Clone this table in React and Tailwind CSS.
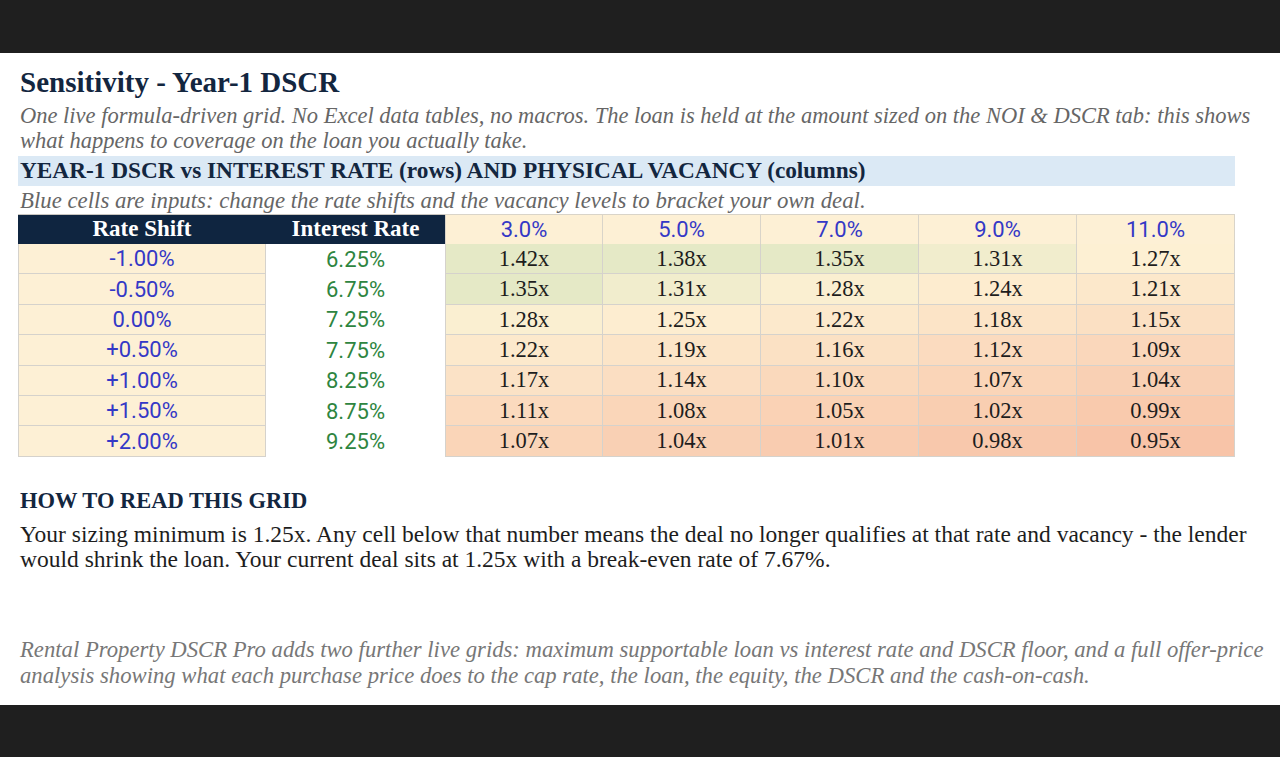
import React from 'react';

const serif = { fontFamily: '"Liberation Serif", "DejaVu Serif", serif' };

const shifts = ['-1.00%', '-0.50%', '0.00%', '+0.50%', '+1.00%', '+1.50%', '+2.00%'];
const rates = ['6.25%', '6.75%', '7.25%', '7.75%', '8.25%', '8.75%', '9.25%'];
const vacancies = ['3.0%', '5.0%', '7.0%', '9.0%', '11.0%'];
const grid = [
  [1.42, 1.38, 1.35, 1.31, 1.27],
  [1.35, 1.31, 1.28, 1.24, 1.21],
  [1.28, 1.25, 1.22, 1.18, 1.15],
  [1.22, 1.19, 1.16, 1.12, 1.09],
  [1.17, 1.14, 1.1, 1.07, 1.04],
  [1.11, 1.08, 1.05, 1.02, 0.99],
  [1.07, 1.04, 1.01, 0.98, 0.95],
];

// three-colour scale: orange (low) -> cream (mid) -> green (high)
const low = [248, 196, 168];
const mid = [253, 240, 211];
const high = [229, 233, 198];
const mix = (a, b, t) => a.map((v, i) => Math.round(v + (b[i] - v) * t));
const cellColor = (v) => {
  let c;
  if (v >= 1.27) c = mix(mid, high, Math.min(1, (v - 1.27) / 0.08));
  else c = mix(mid, low, Math.min(1, (1.27 - v) / 0.32));
  return `rgb(${c[0]}, ${c[1]}, ${c[2]})`;
};

const App = () => {
  return (
    <div className="w-[1280px] h-[757px] bg-white flex flex-col overflow-hidden">
      <div className="h-[53px] bg-[#1f1f1f] shrink-0" />

      <div className="flex-1 px-[20px] pt-[12px]" style={serif}>
        <h1 className="text-[29px] font-bold text-[#13263f] leading-[34px]">
          Sensitivity - Year-1 DSCR
        </h1>
        <p className="mt-[4px] italic text-[#666666] text-[22.5px] leading-[25px] whitespace-nowrap">
          One live formula-driven grid. No Excel data tables, no macros. The loan is held at the amount sized on the NOI &amp; DSCR tab: this shows
          <br />
          what happens to coverage on the loan you actually take.
        </p>

        <div className="-ml-[2px] w-[1217px] mt-[3px] h-[30px] bg-[#dbe9f5] flex items-center px-[2px]">
          <h2 className="text-[23.3px] font-bold text-[#13263f] leading-none">
            YEAR-1 DSCR vs INTEREST RATE (rows) AND PHYSICAL VACANCY (columns)
          </h2>
        </div>

        <p className="mt-[2px] italic text-[#666666] text-[22.8px] leading-[26px] whitespace-nowrap">
          Blue cells are inputs: change the rate shifts and the vacancy levels to bracket your own deal.
        </p>

        {/* Sensitivity grid */}
        <div className="-ml-[2px] w-[1217px] grid grid-cols-[248px_179px_repeat(5,1fr)] text-[22.5px]">
          <div className="h-[30px] bg-[#0f2540] border-t border-[#c9c6c0] text-white font-bold flex items-center justify-center text-[23px]">
            Rate Shift
          </div>
          <div className="h-[30px] bg-[#0f2540] border-t border-[#c9c6c0] text-white font-bold flex items-center justify-center text-[23px]">
            Interest Rate
          </div>
          {vacancies.map((v, i) => (
            <div
              key={v}
              className={`h-[30px] bg-[#fdf0d5] border-r border-t border-[#d9d4c9] text-[#3438c6] flex items-center justify-center font-[Roboto,sans-serif] text-[22px] ${i === 0 ? 'border-l' : ''}`}
            >
              {v}
            </div>
          ))}

          {grid.map((row, r) => (
            <React.Fragment key={r}>
              <div className="h-[30.4px] bg-[#fdf0d5] border-b border-l border-r border-[#d5d2cc] text-[#3438c6] flex items-center justify-center font-[Roboto,sans-serif] text-[22px]">
                {shifts[r]}
              </div>
              <div className="h-[30.4px] bg-white text-[#2e8540] flex items-center justify-center font-[Roboto,sans-serif] text-[22px]">
                {rates[r]}
              </div>
              {row.map((v, c) => (
                <div
                  key={c}
                  className={`h-[30.4px] border-b border-r border-[#d5d2cc] text-[#1d1d1d] flex items-center justify-center ${c === 0 ? 'border-l' : ''}`}
                  style={{ backgroundColor: cellColor(v) }}
                >
                  {v.toFixed(2)}x
                </div>
              ))}
            </React.Fragment>
          ))}
        </div>

        <h3 className="mt-[31px] text-[22.5px] font-bold text-[#13263f] leading-[26px]">HOW TO READ THIS GRID</h3>
        <p className="mt-[8px] text-[23.5px] text-[#1d1d1d] leading-[25px] whitespace-nowrap">
          Your sizing minimum is 1.25x. Any cell below that number means the deal no longer qualifies at that rate and vacancy - the lender
          <br />
          would shrink the loan. Your current deal sits at 1.25x with a break-even rate of 7.67%.
        </p>

        <p className="mt-[65px] italic text-[#777777] text-[22.7px] leading-[26px] whitespace-nowrap">
          Rental Property DSCR Pro adds two further live grids: maximum supportable loan vs interest rate and DSCR floor, and a full offer-price
          <br />
          analysis showing what each purchase price does to the cap rate, the loan, the equity, the DSCR and the cash-on-cash.
        </p>
      </div>

      <div className="h-[52px] bg-[#1f1f1f] shrink-0" />
    </div>
  );
};

export default App;
